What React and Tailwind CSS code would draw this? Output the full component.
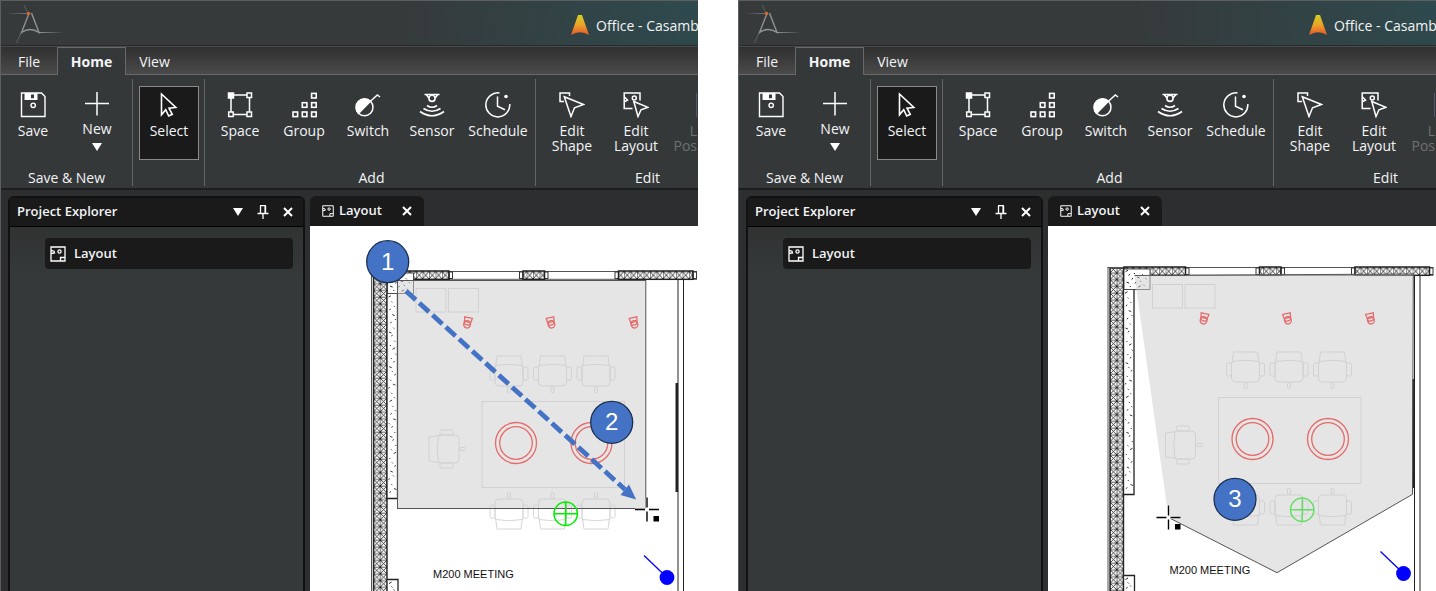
import { useId } from 'react';

const SaveIcon = () => (
  <svg width="26" height="26" viewBox="0 0 26 26" fill="none" stroke="white" strokeWidth="1.4">
    <path d="M1.5 1H21.5L25 4.5V24.5H1.5Z" />
    <path d="M4.5 1H17.5V8H4.5ZM11 2.5V6.2H14V2.5Z" fill="white" fillRule="evenodd" stroke="none" />
    <circle cx="13.2" cy="13.3" r="2.2" />
  </svg>
);

const PlusIcon = () => (
  <svg width="26" height="24" viewBox="0 0 26 24" stroke="white" strokeWidth="1.5">
    <path d="M13 -0.5V23.5M1 11.5H25" />
  </svg>
);

const CursorIcon = () => (
  <svg width="26" height="26" viewBox="0 0 26 26" fill="none" stroke="white" strokeWidth="1.6">
    <path d="M5.5 2V22.7L9.7 17.7L12.7 24L16.3 22.3L13 16.2L19.8 15.5Z" />
  </svg>
);

const SpaceIcon = () => (
  <svg width="26" height="26" viewBox="0 0 26 26" fill="none" stroke="white" strokeWidth="1.5">
    <path d="M4 6V20M22.5 6V20M6 3H20M6 22.5H20" />
    <rect x="1.5" y="1" width="5" height="5" fill="white" />
    <rect x="20" y="1" width="4.5" height="4.5" />
    <rect x="1.7" y="20" width="4.5" height="4.5" />
    <rect x="20" y="20" width="4.5" height="4.5" />
  </svg>
);

const groupCells = [[2, 0], [1, 1], [2, 1], [0, 2], [1, 2], [2, 2]];

const GroupIcon = () => (
  <svg width="26" height="26" viewBox="0 0 26 26" fill="none" stroke="white" strokeWidth="1.6">
    {groupCells.map(([col, row]) => (
      <rect key={`${col}-${row}`} x={2 + col * 9.3} y={1.4 + row * 9.3} width="4.6" height="4.6" />
    ))}
  </svg>
);

const SwitchIcon = () => (
  <svg width="26" height="26" viewBox="0 0 26 26" fill="none" stroke="white" strokeWidth="1.5">
    <circle cx="9.5" cy="15.3" r="8.5" />
    <path d="M15.5 9.3L3.5 21.3A8.5 8.5 0 0 1 15.5 9.3Z" fill="white" />
    <path d="M15.5 9.3L22.3 3L25 5" />
  </svg>
);

const SensorIcon = () => (
  <svg width="26" height="26" viewBox="0 0 26 26" fill="none" stroke="white" strokeWidth="1.6">
    <path d="M5.5 2.5H20.5M7.5 3L10 6M18.5 3L16 6" />
    <circle cx="13" cy="6.3" r="3.1" />
    <path d="M8 13.5Q13 17 18 13.5M4.5 16.5Q13 22 21.5 16.5M1 19.5Q13 28 25 19.5" />
  </svg>
);

const ScheduleIcon = () => (
  <svg width="26" height="26" viewBox="0 0 26 26" fill="none" stroke="white" strokeWidth="1.5">
    <path d="M14.5 1A12 12 0 1 0 24.8 12" />
    <path d="M12.5 4.5V14.3L20 17.8" />
    <circle cx="21" cy="4.5" r="1.8" fill="white" stroke="none" />
  </svg>
);

const EditShapeIcon = () => (
  <svg width="26" height="26" viewBox="0 0 26 26" fill="none" stroke="white" strokeWidth="1.5">
    <path d="M5 9.5H1V1H10.5V4" />
    <path d="M5.3 4.8L24.5 12.5L15.5 15.8L12 24.5Z" />
  </svg>
);

const EditLayoutIcon = () => (
  <svg width="26" height="26" viewBox="0 0 26 26" fill="none" stroke="white" strokeWidth="1.5">
    <path d="M9.5 16.5H1.2V1H17V8.5M1.5 5L4.5 8L2 9.5" />
    <circle cx="11.3" cy="6" r="2" />
    <path d="M10.8 9.5L25 15.3L18 17.8L15 24.5Z" />
  </svg>
);

const LayoutIcon = ({ size }) => (
  <svg width={size} height={size} viewBox="0 0 16 16" fill="none" stroke="white" strokeWidth="1.3">
    <path d="M1 1H15V15H1ZM1 4.5L4 5.2L4.5 7L1 7.5" />
    <circle cx="9.5" cy="5.5" r="1.6" />
    <path d="M10.5 15V11.5H15" />
  </svg>
);

const Triangle = () => (
  <svg width="10" height="8" viewBox="0 0 10 8" fill="white">
    <path d="M0 0H10L5 8Z" />
  </svg>
);

const PinIcon = () => (
  <svg width="12" height="14" viewBox="0 0 12 14" fill="none" stroke="white" strokeWidth="1.3">
    <path d="M3 0.7H9M3.5 1V8M0.5 8.5H11.5M6 8.5V14" />
    <path d="M8.3 1V8" strokeWidth="1.8" />
  </svg>
);

const CloseIcon = () => (
  <svg width="10" height="10" viewBox="0 0 10 10" stroke="white" strokeWidth="2">
    <path d="M1 1L9 9M9 1L1 9" />
  </svg>
);

const SketchLogo = ({ id }) => (
  <svg width="64" height="44" viewBox="0 0 64 44" fill="none">
    <defs>
      <linearGradient id={`${id}-l`}>
        <stop offset="0" stopColor="#8f9394" stopOpacity="0" />
        <stop offset="1" stopColor="#8f9394" stopOpacity="0.7" />
      </linearGradient>
      <linearGradient id={`${id}-r`}>
        <stop offset="0" stopColor="#8f9394" />
        <stop offset="1" stopColor="#8f9394" stopOpacity="0" />
      </linearGradient>
    </defs>
    <rect x="5" y="12" width="23" height="1" fill={`url(#${id}-l)`} />
    <rect x="38" y="31" width="25" height="1" fill={`url(#${id}-r)`} />
    <path d="M23 4L27 12M20 32L15.5 42" stroke="#5f6364" strokeWidth="0.9" />
    <path d="M30.5 12L38 31.5Q29 25.5 20.5 31.5L28 12.5" stroke="#8f9394" strokeWidth="1.4" />
    <circle cx="27.5" cy="12.5" r="1.8" fill="#d0692c" />
  </svg>
);

const AppLogo = ({ id }) => (
  <svg width="18" height="20" viewBox="0 0 18 20">
    <defs>
      <linearGradient id={`${id}-a`} x1="0" y1="0" x2="0" y2="1">
        <stop offset="0" stopColor="#d6cf24" />
        <stop offset="0.5" stopColor="#eba228" />
        <stop offset="1" stopColor="#e9562a" />
      </linearGradient>
    </defs>
    <path d="M7 0H11L18 20Q9 14.5 0 20Z" fill={`url(#${id}-a)`} />
  </svg>
);

const addTools = [
  { label: 'Space', icon: SpaceIcon },
  { label: 'Group', icon: GroupIcon },
  { label: 'Switch', icon: SwitchIcon },
  { label: 'Sensor', icon: SensorIcon },
];

const RibbonButton = ({ icon: Icon, label, className = 'w-16', children }) => (
  <button className={`flex h-[74px] shrink-0 flex-col items-center gap-[5px] pt-[6px] leading-[15px] ${className}`}>
    <Icon />
    <span>{label}</span>
    {children}
  </button>
);

const RibbonGroup = ({ label, className = '', children }) => (
  <div className={`flex shrink-0 flex-col justify-between border-r border-[#636566] ${className}`}>
    <div className="flex pt-[7px]">{children}</div>
    <div className="text-center leading-[17px]">{label}</div>
  </div>
);

const Chair = ({ x, y, turn = 0 }) => (
  <g transform={`translate(${x} ${y}) rotate(${turn})`}>
    <path d="M-13.5 -8L-12 -19H12L13.5 -8M-13.5 -9.5Q0 -12 13.5 -9.5" />
    <path d="M-14 -9V7Q-14 11 -10 11H10Q14 11 14 7V-9" />
    <rect x="-19" y="-8" width="5" height="13" rx="1.5" />
    <rect x="14" y="-8" width="5" height="13" rx="1.5" />
    <rect x="-1.5" y="12" width="3" height="5.5" rx="1" />
  </g>
);

const Spotlight = ({ x, turn }) => (
  <g transform={`translate(${x} 322.5) rotate(${turn})`}>
    <path d="M-3 1L-3.9 -5H3.9L3 1M-3 -0.5H3" />
    <ellipse cx="0" cy="1.8" rx="3.4" ry="3.8" />
    <path d="M-3 1.5Q0 3.5 3 1.5" />
  </g>
);

// small marks for the concrete fill, spread over the given strip
const speckles = (x, y, width, height, count) =>
  Array.from({ length: count }, (_, i) => {
    const px = x + ((i * 37) % 97) / 97 * width;
    const py = y + ((i + 0.5) / count) * height;
    return `M${px.toFixed(1)} ${py.toFixed(1)}l${i % 4 ? 1 : 2.5} ${i % 3 ? 1 : -1.5}`;
  }).join('');

const FloorPlan = ({ id }) => {
  const wallHatch = `url(#${id}-w)`;
  const topHatch = `url(#${id}-t)`;
  return (
    <g fill="none" stroke="#222">
      <defs>
        <pattern id={`${id}-w`} x="373.5" width="6.75" height="6.75" patternUnits="userSpaceOnUse">
          <rect width="7" height="7" fill="white" />
          <path d="M0 0L6.75 6.75M6.75 0L0 6.75" stroke="#111" strokeWidth="0.8" />
        </pattern>
        <pattern id={`${id}-t`} y="271.5" width="6.5" height="7.5" patternUnits="userSpaceOnUse">
          <rect width="7" height="8" fill="white" />
          <path d="M0 0L6.5 7.5M6.5 0L0 7.5" stroke="#111" strokeWidth="0.8" />
        </pattern>
      </defs>

      {/* outer walls */}
      <path d="M371.5 271V600" stroke="#555" />
      <rect x="373.5" y="272" width="13.5" height="340" fill={wallHatch} strokeWidth="1.4" />
      <path d="M371 271.5H697M400 279.3H697" stroke="#555" />
      <rect x="387.5" y="271" width="61.5" height="8.3" fill={topHatch} strokeWidth="1.5" />
      <rect x="449" y="272" width="3.5" height="6.5" strokeWidth="0.9" />
      <rect x="519.5" y="272" width="3.5" height="6.5" strokeWidth="0.9" />
      <rect x="523" y="271" width="21.5" height="8.3" fill={topHatch} strokeWidth="1.5" />
      <rect x="544.5" y="272" width="3.5" height="6.5" strokeWidth="0.9" />
      <rect x="615" y="272" width="3.5" height="6.5" strokeWidth="0.9" />
      <rect x="618.5" y="271" width="74.5" height="8.3" fill={topHatch} strokeWidth="1.5" />
      <rect x="693" y="272" width="3.5" height="6.5" strokeWidth="0.9" />
      <path d="M678 279V600M683.5 279V600" />
      <path d="M676.8 383V492" strokeWidth="2.6" />

      {/* concrete */}
      <path d="M387 293V498.5H397.5V293M387 579.5H398V600" fill="white" strokeWidth="1.3" />
      <rect x="387.5" y="273" width="26" height="20.5" fill="white" strokeWidth="0.8" />
      <path d={speckles(388.5, 295, 7, 200, 46)} strokeWidth="0.9" />
      <path d={speckles(389, 275, 22, 17, 13)} />
      <path d={speckles(389, 582, 6, 12, 4)} />

      <g stroke="#d6d6d6">
        <rect x="416" y="288.5" width="30" height="23.5" />
        <rect x="448.5" y="288.5" width="30" height="23.5" />
        <rect x="482" y="401.5" width="142.5" height="86" />
        <Chair x={509} y={375} />
        <Chair x={552.5} y={375} />
        <Chair x={596} y={375} />
        <Chair x={509} y={510} turn={180} />
        <Chair x={552.5} y={510} turn={180} />
        <Chair x={596} y={510} turn={180} />
        <Chair x={448} y={449} turn={-90} />
      </g>

      <g stroke="#ff0a0a" strokeWidth="1.3">
        <Spotlight x={467.5} turn={12} />
        <Spotlight x={551} turn={-12} />
        <Spotlight x={634} turn={-12} />
        <circle cx="516" cy="443" r="20.5" />
        <circle cx="516" cy="443" r="16.3" />
        <circle cx="591.5" cy="443" r="20.5" />
        <circle cx="591.5" cy="443" r="16.3" />
      </g>

      <path d="M644 555.5L667 577.5" stroke="#00f" strokeWidth="1.3" />
      <circle cx="667" cy="577.5" r="7.4" fill="#00f" stroke="none" />
      <text x="433" y="578" fill="#111" stroke="none" className="font-['Liberation_Sans',sans-serif] text-[11px]">
        M200 MEETING
      </text>
    </g>
  );
};

const Luminaire = () => (
  <g fill="none" stroke="#00f000" strokeWidth="1.5">
    <circle cx="565.7" cy="513.7" r="11.7" />
    <path d="M554 513.7H577.5M565.7 502V525.5" />
  </g>
);

const Crosshair = ({ x, y }) => (
  <g transform={`translate(${x} ${y})`}>
    <path d="M-12 0H12M0 -12V12" stroke="white" strokeWidth="2.5" />
    <path d="M-12 0H-2M2 0H12M0 -12V-2M0 2V12" stroke="black" strokeWidth="1.4" />
    <rect x="6.5" y="6.5" width="5.5" height="5.5" fill="black" />
  </g>
);

const StepBadge = ({ x, y, step }) => (
  <g>
    <circle cx={x} cy={y} r="21" fill="#4472c4" stroke="#1c3054" strokeWidth="1.3" />
    <text x={x} y={y + 8} textAnchor="middle" fill="white" className="font-['Liberation_Sans',sans-serif] text-[24px]">
      {step}
    </text>
  </g>
);

const RectangleDrawing = ({ id }) => (
  <svg className="block shrink-0" width="388" height="365" viewBox="310 226 388 365">
    <FloorPlan id={id} />
    <rect x="397.5" y="280.5" width="248.3" height="228" fill="#ccc" fillOpacity="0.5" stroke="#555" />
    <Luminaire />
    <Crosshair x={647} y={509.5} />
    <path d="M406 291L625 489.5" stroke="#4472c4" strokeWidth="4.8" strokeDasharray="13.2 4.7" />
    <path d="M636.2 499.5L629 484.5L620.5 495Z" fill="#4472c4" />
    <StepBadge x={387.7} y={261.7} step={1} />
    <StepBadge x={611.7} y={422.3} step={2} />
  </svg>
);

const PolygonDrawing = ({ id }) => (
  <svg className="block shrink-0" width="388" height="365" viewBox="310 226 388 365">
    <g transform="translate(-1.5 -4)">
      <FloorPlan id={id} />
      <Luminaire />
    </g>
    <path d="M396.5 275.5L675.3 274L674.5 494.3L539 572.7L430.5 517.5Z" fill="#ccc" fillOpacity="0.5" />
    <path d="M396.5 275.5L675.3 274L674.5 494.3L539 572.7L430.5 517.5" fill="none" stroke="#555" />
    <Crosshair x={430.5} y={517.5} />
    <StepBadge x={497} y={499.3} step={3} />
  </svg>
);

const AppWindow = ({ drawing: Drawing }) => {
  const id = useId();

  return (
    <section className="flex min-w-0 flex-col overflow-hidden border-t border-l border-[#5c5e5f] bg-[#2d2e2f] text-[14px] text-gray-100">
      {/* Title bar */}
      <header className="flex h-[45px] items-center justify-between border-b border-[#282a2b] bg-[#363a3b] bg-[radial-gradient(circle_at_100%_0,#2e4a4e,#363a3b_300px)]">
        <SketchLogo id={id} />
        <div className="flex shrink-0 items-center gap-[7px] pt-1 whitespace-nowrap">
          <AppLogo id={id} />
          <span className="w-[102px]">Office - Casamb</span>
        </div>
      </header>

      {/* Ribbon tabs */}
      <nav className="flex h-[29px] border-t border-[#484a4b] bg-linear-to-b from-[#303030] to-[#4b4b4b]">
        <button className="w-[56px] border-b border-[#686868] pt-[2px]">File</button>
        <button className="w-[69px] border border-b-0 border-[#686868] bg-[#353839] font-bold">Home</button>
        <button className="w-[57px] border-b border-[#686868] pt-[2px]">View</button>
        <div className="flex-1 border-b border-[#686868]" />
      </nav>

      {/* Ribbon */}
      <div className="flex h-[115px] overflow-hidden border-b-2 border-[#1c1d1e] bg-[#353839] pt-1 pb-[2px]">
        <RibbonGroup label="Save &amp; New" className="w-[132px]">
          <RibbonButton icon={SaveIcon} label="Save" />
          <RibbonButton icon={PlusIcon} label="New">
            <span className="pt-[2px]"><Triangle /></span>
          </RibbonButton>
        </RibbonGroup>
        <RibbonGroup className="w-[72px] pl-[6px]">
          <RibbonButton icon={CursorIcon} label="Select" className="w-[60px] bg-[#1a1a1a] outline-1 -outline-offset-1 outline-[#8a8a8a]" />
        </RibbonGroup>
        <RibbonGroup label="Add" className="w-[331px] pl-[3px]">
          {addTools.map((tool) => (
            <RibbonButton key={tool.label} icon={tool.icon} label={tool.label} />
          ))}
          <RibbonButton icon={ScheduleIcon} label="Schedule" className="w-[68px]" />
        </RibbonGroup>
        <RibbonGroup label="Edit" className="w-[220px] pl-1">
          <RibbonButton icon={EditShapeIcon} label="Edit Shape" className="w-16 px-2" />
          <RibbonButton icon={EditLayoutIcon} label="Edit Layout" className="w-16 px-2" />
          <button className="flex h-[74px] w-[29px] flex-col gap-[5px] pt-[6px] text-right leading-[15px] text-[#6f7172]" disabled>
            <svg className="self-end" width="2" height="26" viewBox="0 0 2 26">
              <path d="M1.500 1V25" stroke="#55566f" />
            </svg>
            <span className="w-full">L Pos</span>
          </button>
        </RibbonGroup>
      </div>

      {/* Workspace */}
      <div className="flex flex-1 pt-[6px] pl-[7px]">
        <aside className="flex w-[297px] shrink-0 flex-col rounded-t-md border-2 border-b-0 border-[#111] bg-linear-to-b from-[#2e2e2e] to-[#35393a] to-20%">
          <div className="flex h-[29px] items-center border-b border-black bg-[#1a1a1a] px-[7px] text-[13px] font-semibold">
            <h2 className="flex-1">Project Explorer</h2>
            <div className="flex items-center gap-[14px] pr-[3px]">
              <button aria-label="Menu"><Triangle /></button>
              <button aria-label="Pin"><PinIcon /></button>
              <button aria-label="Close"><CloseIcon /></button>
            </div>
          </div>
          <div className="pt-[11px] pr-[10px] pl-[35px]">
            <button className="flex h-[31px] w-full items-center gap-2 rounded-sm bg-[#1a1a1a] px-[5px] text-[13px] font-semibold">
              <LayoutIcon size={16} />
              Layout
            </button>
          </div>
        </aside>

        <main className="ml-[5px] flex min-w-0 flex-1 flex-col">
          <div className="flex h-[30px] w-[114px] items-center gap-[5px] rounded-t-md bg-[#1a1a1a] px-3 text-[13px] font-semibold">
            <LayoutIcon size={12} />
            <span className="flex-1">Layout</span>
            <button aria-label="Close tab"><CloseIcon /></button>
          </div>
          <div className="flex flex-1 overflow-hidden bg-white">
            <Drawing id={id} />
          </div>
        </main>
      </div>
    </section>
  );
};

const App = () => (
  <div className="grid min-h-screen grid-cols-2 gap-10 bg-white font-['Open_Sans',sans-serif]">
    <AppWindow drawing={RectangleDrawing} />
    <AppWindow drawing={PolygonDrawing} />
  </div>
);

export default App;
